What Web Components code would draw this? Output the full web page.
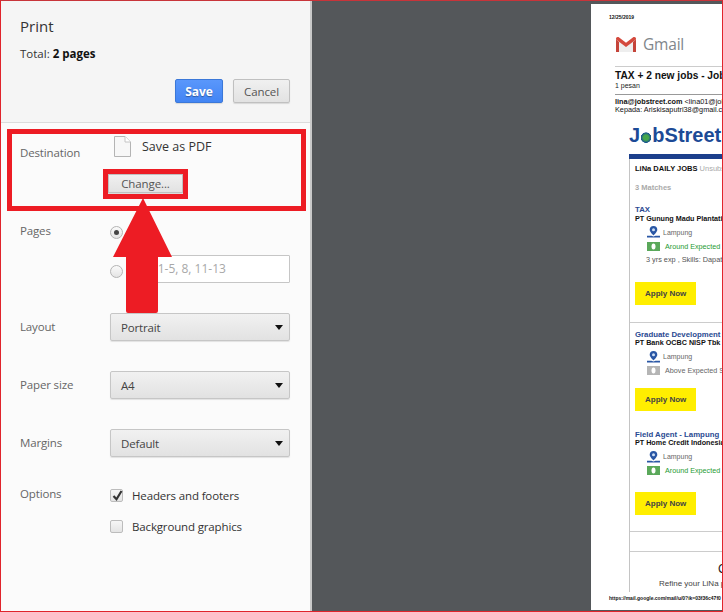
<!DOCTYPE html>
<html lang="en"><head><meta charset="utf-8"><title>Print</title>
<style>html,body{margin:0;padding:0;height:612px;overflow:hidden;background:#54575a}</style>
</head><body>
<print-app>
  <print-sidebar slot="side">
    <print-row label="Destination" style="--h:92px;--pt:12px;--lt:9px">
      <div class="dest"><doc-icon></doc-icon><span style="margin-top:3px">Save as PDF</span></div>
    </print-row>
    <print-row label="Pages" style="--h:97px;--pt:10px;--lt:-3px">
      <print-pages></print-pages>
    </print-row>
    <print-row label="Layout" style="--h:58px;--pt:0px;--lt:6px"><print-select>Portrait</print-select></print-row>
    <print-row label="Paper size" style="--h:58px;--pt:0px;--lt:6px"><print-select>A4</print-select></print-row>
    <print-row label="Margins" style="--h:60px;--pt:0px;--lt:6px"><print-select>Default</print-select></print-row>
    <print-row label="Options" style="--h:80px;--pt:0px;--lt:-3px">
      <print-check checked>Headers and footers</print-check>
      <print-check>Background graphics</print-check>
    </print-row>
  </print-sidebar>
  <mail-page slot="page">
    <job-card title="TAX" company="PT Gunung Madu Plantations" money="Around Expected Salary" skills="3 yrs exp , Skills: Dapat bekerja sama" style="--pt:5px;--btn:16px;--pb:17px"></job-card>
    <job-card title="Graduate Development Program" company="PT Bank OCBC NISP Tbk" money="Above Expected Salary" muted style="--pt:8px;--btn:10.500px;--pb:20px;--border:0"></job-card>
    <job-card title="Field Agent - Lampung" company="PT Home Credit Indonesia" money="Around Expected Salary" style="--pt:0px;--btn:14.500px;--pb:16px"></job-card>
  </mail-page>
  <print-notes slot="over"></print-notes>
</print-app>
<script>
function def(name, css, html){
  customElements.define(name, class extends HTMLElement{
    constructor(){super();const r=this.attachShadow({mode:'open'});
      r.innerHTML='<style>'+css+'</style>'+(typeof html==='function'?html(this):html);}
  });
}
const attr=(e,n,d='')=>e.getAttribute(n)??d;
def('print-app',`
 :host{display:grid;grid-template-columns:310px 2px 1fr;width:723px;height:612px;position:relative;overflow:hidden;font-family:"Open Sans","Noto Sans",sans-serif;background:#54575a}
 .rule{background:#c9c9c9}
 .frame{position:absolute;inset:0;border:1px solid #e0242c;border-top:1px solid #c8343a;pointer-events:none}
 .view{display:flex;justify-content:flex-end;overflow:hidden;padding-top:4px;min-width:0}
`,`<slot name="side"></slot><div class="rule"></div><div class="view"><slot name="page"></slot></div><slot name="over"></slot><div class="frame"></div>`);

def('print-sidebar',`
 :host{display:flex;flex-direction:column;background:#fbfbfb;color:#444;height:612px;overflow:hidden}
 header{height:123px;box-sizing:border-box;background:#f5f5f5;border-bottom:1px solid #dcdcdc;padding:16px 20px 0 20px;flex:none;display:flex;flex-direction:column}
 h1{font-size:15px;font-weight:400;margin:0;line-height:20px;color:#333}
 p{font-size:11.500px;margin:0;line-height:16px;margin-top:10px;color:#333;white-space:nowrap}
 b{color:#111}
 .acts{display:flex;justify-content:flex-end;gap:10px;margin-top:17px}
 .list{flex:1;min-height:0;padding-top:1px}
`,`<header><h1>Print</h1><p>Total: <b>2 pages</b></p><div class="acts"><print-button primary>Save</print-button><print-button>Cancel</print-button></div></header><div class="list"><slot></slot></div>`);

def('print-button',`
 :host{display:inline-flex;align-items:center;justify-content:center;box-sizing:border-box;height:24px;width:57px;font-size:11.500px;letter-spacing:-.1px;color:#555;border:1px solid #c0c0c0;border-radius:2px;background:linear-gradient(#f0f0f0,#e2e2e2);box-shadow:0 1px 1px rgba(0,0,0,.12);white-space:nowrap}
 :host([primary]){width:48px;background:linear-gradient(#5a97fb,#4285f4);border-color:#3b78d8;color:#fff;font-weight:700;font-size:12px;text-shadow:0 1px 1px rgba(0,0,0,.35)}
`,`<slot></slot>`);

def('print-row',`
 :host{display:grid;grid-template-columns:90px 180px;padding-left:20px;height:var(--h);box-sizing:border-box;padding-top:var(--pt);font-size:11.500px;letter-spacing:-.15px}
 .l{color:#666;white-space:nowrap;line-height:16px;margin-top:var(--lt)}
 .c{min-width:0;color:#333}
 ::slotted(.dest){display:flex;align-items:flex-start;gap:11px;height:24px;font-size:12.500px;line-height:16px;letter-spacing:0;color:#333}
`,e=>`<div class="l">${attr(e,'label')}</div><div class="c"><slot></slot></div>`);

def('doc-icon',`
 :host{display:block;width:17px;height:21px;margin:0 0 0 4px;flex:none}
 svg{display:block}
`,`<svg width="17" height="21" viewBox="0 0 17 21"><path d="M.5.5h10.500l5.500 5.500v14.500H.5z" fill="#f7f7f7" stroke="#b4b4b4"/><path d="M11 .5v5.500h5.500" fill="#fff" stroke="#c4c4c4"/></svg>`);

def('print-select',`
 :host{display:flex;align-items:center;justify-content:space-between;box-sizing:border-box;height:28px;width:180px;padding:0 4px 0 10px;font-size:11.500px;color:#444;border:1px solid #c6c6c6;border-radius:2px;background:linear-gradient(#f1f1f1,#e2e2e2);box-shadow:0 1px 1px rgba(0,0,0,.1)}
 i{width:0;height:0;border-left:4px solid transparent;border-right:4px solid transparent;border-top:5px solid #111;margin-right:2px}
`,`<span><slot></slot></span><i></i>`);

def('print-pages',`
 :host{display:flex;flex-direction:column;font-size:11.500px;color:#333}
 .r{display:flex;align-items:center;gap:9px;height:13px}
 .r2{display:flex;align-items:flex-start;height:28px;margin-top:16px;gap:5px}
 .dot{width:13px;height:13px;box-sizing:border-box;border-radius:50%;border:1px solid #b4b4b4;background:linear-gradient(#fafafa,#e4e4e4);display:flex;align-items:center;justify-content:center;flex:none}
 .r2 .dot{margin-top:10px}
 .dot i{width:5px;height:5px;border-radius:50%;background:#444}
 .in{box-sizing:border-box;width:162px;height:28px;border:1px solid #c6c6c6;border-radius:1px;background:#fff;color:#a8a8a8;line-height:26px;padding-left:6px;white-space:nowrap;letter-spacing:0;font-size:12px}
`,`<div class="r"><div class="dot"><i></i></div><span>All</span></div><div class="r2"><div class="dot"></div><div class="in">e.g. 1-5, 8, 11-13</div></div>`);

def('print-check',`
 :host{display:flex;align-items:center;gap:9px;height:13px;margin-bottom:18px;font-size:11.500px;color:#333;white-space:nowrap}
 .b{width:13px;height:13px;box-sizing:border-box;border:1px solid #bcbcbc;border-radius:2px;background:linear-gradient(#f6f6f6,#e4e4e4);position:relative;flex:none}
 svg{position:absolute;left:0;top:-1px;display:none}
 :host([checked]) svg{display:block}
`,`<div class="b"><svg width="13" height="13" viewBox="0 0 13 13"><path d="M2.500 7l3 3.200L10.500 2" fill="none" stroke="#333" stroke-width="2.200"/></svg></div><span><slot></slot></span>`);

def('print-notes',`
 :host{position:absolute;inset:0;pointer-events:none;display:block}
 .box{position:absolute;box-sizing:border-box;border:5px solid #ed1c24}
 .a{left:7px;top:129px;width:299px;height:82px}
 .b{left:103px;top:169px;width:85px;height:30px}
 print-button{position:absolute;left:108px;top:174px;width:75px;height:19px;border-radius:0}
 svg{position:absolute;left:110px;top:195px}
`,`<print-button>Change...</print-button><div class="box a"></div><div class="box b"></div>
<svg width="66" height="122" viewBox="0 0 66 122"><path d="M33 3L3 62H16V116q0 2 2 2H46q2 0 2-2V62H62z" fill="#ed1c24"/></svg>`);

def('mail-page',`
 :host{display:block;width:132px;height:606px;background:#fff;overflow:hidden;font-family:"Liberation Sans",Arial,sans-serif;color:#111;box-sizing:border-box;white-space:nowrap;flex:none}
 .date{font-size:5px;font-weight:700;line-height:6px;padding:10px 0 0 18px;height:16px;box-sizing:border-box}
 .logo{display:flex;align-items:center;gap:6px;height:18px;margin:15px 0 0 24px}
 .logo span{font-size:15.500px;color:#80868b;font-family:"Open Sans",sans-serif;line-height:18px;letter-spacing:-.2px}
 .line{height:1px;background:#ccc;margin:13px 0 0 24px}
 .t{margin:3px 0 0 24px;font-size:10.200px;font-weight:700;line-height:12px}
 .s{margin:-1px 0 0 24px;font-size:7px;line-height:9px;color:#222}
 .line2{height:1px;background:#999;margin:4px 0 0 24px}
 .h{margin:3px 0 0 24px;font-size:7.300px;line-height:8px}
 .js{margin:10px 0 0 38px;font-size:20px;font-weight:700;line-height:22px;color:#1c4a96}
 .js i{font-style:normal;color:transparent;background:radial-gradient(circle 5.500px at 50% 62%,#46a84a 0 45%,#19558f 90%,transparent 100%)}
 .bar{height:5px;background:#1c3f8c;margin:8px 0 0 38px}
 .card{margin-left:38px;border-left:1px solid #c4c4c4;height:433px;overflow:hidden}
 .top{font-size:7.500px;font-weight:700;line-height:10px;margin:5px 0 0 5px}
 .top em{font-style:normal;font-weight:400;color:#aaa}
 .m{font-size:7.500px;font-weight:700;color:#aaa;line-height:10px;margin:9px 0 8px 5px}
 .gap{height:19px;border-bottom:1px solid #ccc}
 .end{font-size:8px;color:#444;line-height:10px}
 .end b{display:block;font-size:12px;font-weight:400;color:#222;line-height:14px;margin:10px 0 3px 88px}
 .end span{display:block;margin-left:29px}
 .foot{font-size:5px;font-weight:700;line-height:6px;padding:0 0 0 18px;margin-top:3px}
`,`<div class="date">12/25/2019</div>
<div class="logo"><svg width="22" height="17" viewBox="0 0 22 17"><path d="M1 16V3l10 7.500L21 3v13" fill="#eee"/><path d="M1 16h3V6L1 3.500z" fill="#c5443a"/><path d="M18 16h3V3.500L18 6z" fill="#c5443a"/><path d="M1 3.500V2.500q0-2 2.500-1.500L11 6.700 18.500 1q2.500-.5 2.500 1.500v1L11 11z" fill="#d4493d"/></svg><span>Gmail</span></div>
<div class="line"></div>
<div class="t">TAX + 2 new jobs - JobStreet</div>
<div class="s">1 pesan</div>
<div class="line2"></div>
<div class="h"><b>lina@jobstreet.com</b> &lt;lina01@jobstreet.com&gt;<br>Kepada: Ariskisaputri38@gmail.com</div>
<div class="js">J<i>o</i>bStreet</div>
<div class="bar"></div>
<div class="card"><div class="top">LiNa DAILY JOBS <em>Unsubscribe</em></div><div class="m">3 Matches</div><slot></slot><div class="gap"></div><div class="end"><b>Change</b><span>Refine your LiNa preferences</span></div></div>
<div class="foot">https://mail.google.com/mail/u/0?ik=03f36c47f0</div>`);

def('job-card',`
 :host{display:block;padding:var(--pt) 0 var(--pb) 5px;border-bottom:var(--border,1px solid #ccc);font-size:7.500px}
 .t{color:#2a4a92;font-weight:700;font-size:7.800px;line-height:8.500px}
 .c{font-weight:700;color:#111;font-size:7.200px;line-height:8.500px}
 .r{display:flex;align-items:center;height:13px;padding-left:12px;color:#666;font-size:7px;margin-top:1px}
 .r.l{margin-top:2.500px}
 .r svg{flex:none;margin-right:3px}
 .g{color:#1f9a33;font-size:7.200px}
 :host([muted]) .g{color:#666}
 .sk{height:13px;line-height:13px;padding-left:11px;color:#555;font-size:7.300px}
 .b{display:flex;align-items:center;box-sizing:border-box;width:61px;height:23px;padding-left:10px;background:#ffee00;font-weight:700;font-size:8px;color:#444;margin-top:var(--btn)}
`,e=>`<div class="t">${attr(e,'title')}</div><div class="c">${attr(e,'company')}</div>
<div class="r l"><svg width="13" height="12" viewBox="0 0 13 12"><path d="M6.500 0a3.800 3.800 0 0 0-3.800 3.800C2.700 6 6.500 9.500 6.500 9.500s3.800-3.500 3.800-5.700A3.800 3.800 0 0 0 6.500 0z" fill="#2a57a5"/><circle cx="6.500" cy="3.800" r="1.500" fill="#cfe0f5"/><path d="M0 9.800h4.500l2 .8 2-.8H13v1.700H0z" fill="#2a57a5"/></svg><span>Lampung</span></div>
<div class="r g"><svg width="13" height="9" viewBox="0 0 13 9" style="margin-right:5px"><rect width="13" height="9" fill="${e.hasAttribute('muted')?'#b5b5b5':'#5aa85a'}"/><ellipse cx="6.500" cy="4.500" rx="2" ry="3" fill="#fff"/></svg><span>${attr(e,'money')}</span></div>
${e.hasAttribute('skills')?`<div class="sk">${attr(e,'skills')}</div>`:''}<div class="b">Apply Now</div>`);
</script>
</body></html>
